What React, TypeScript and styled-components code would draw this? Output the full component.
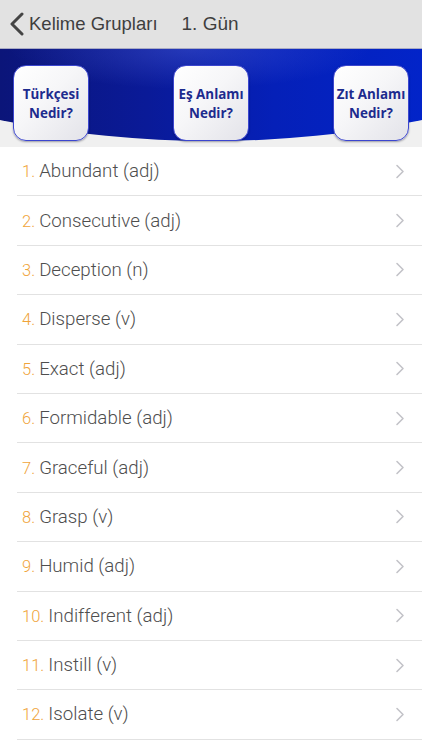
import React from 'react'
import styled, { createGlobalStyle } from 'styled-components'

const GlobalStyle = createGlobalStyle`
  html, body {
    margin: 0;
    padding: 0;
    background: #ffffff;
  }
  body {
    font-family: 'Liberation Sans', Arial, sans-serif;
    -webkit-font-smoothing: antialiased;
  }
`

const Screen = styled.div`
  width: 422px;
  min-height: 750px;
  background: #ffffff;
  overflow: hidden;
`

const NavBar = styled.div`
  display: flex;
  align-items: center;
  height: 48px;
  background: #e2e2e2;
  border-bottom: 1px solid #a9abc4;
  padding-left: 9px;
  color: #3e3e3e;
  font-size: 18.5px;
`

const BackButton = styled.div`
  display: flex;
  align-items: center;
  gap: 4px;
`

const Title = styled.div`
  margin-left: 24px;
  font-size: 19px;
`

const Banner = styled.div`
  position: relative;
  height: 98px;
  background: #f0f0f0;
  display: flex;
  justify-content: space-between;
  align-items: flex-start;
  padding: 16px 13px 0;
  box-sizing: border-box;

  &::before {
    content: '';
    position: absolute;
    inset: 0;
    background:
      radial-gradient(ellipse 180px 40px at 45% 0%, rgba(90, 110, 230, 0.35), rgba(90, 110, 230, 0) 100%),
      linear-gradient(90deg, #0b1579 0%, #0a1a98 35%, #0520b8 65%, #0224c9 100%);
    clip-path: circle(1070px at 50% -978px);
  }
`

const QuizButton = styled.div`
  position: relative;
  width: 76px;
  height: 76px;
  box-sizing: border-box;
  border-radius: 13px;
  border: 1.5px solid #3c46cf;
  background: linear-gradient(135deg, #ffffff 0%, #f6f6f8 45%, #e3e3e9 100%);
  box-shadow: 0 1px 2px rgba(0, 0, 30, 0.35);
  display: flex;
  align-items: center;
  justify-content: center;
  text-align: center;
  padding-top: 2px;
  font-family: 'Open Sans', Inter, sans-serif;
  font-weight: 700;
  font-size: 13.4px;
  line-height: 19px;
  color: #1d2b8e;
`

const List = styled.div`
  display: flex;
  flex-direction: column;
`

const Row = styled.div`
  height: 49.4px;
  box-sizing: border-box;
  margin-left: 17px;
  padding: 0 17px 0 5px;
  border-bottom: 1px solid #e2e2e2;
  display: flex;
  align-items: center;
  justify-content: space-between;
`

const Label = styled.div`
  font-family: Roboto, 'Liberation Sans', sans-serif;
  font-weight: 300;
  font-size: 18.7px;
  color: #4e4e4e;
`

const Index = styled.span`
  color: #f0a43a;
  font-size: 16.5px;
`

const words = [
  'Abundant (adj)',
  'Consecutive (adj)',
  'Deception (n)',
  'Disperse (v)',
  'Exact (adj)',
  'Formidable (adj)',
  'Graceful (adj)',
  'Grasp (v)',
  'Humid (adj)',
  'Indifferent (adj)',
  'Instill (v)',
  'Isolate (v)',
]

const Chevron = () => (
  <svg width="10" height="15" viewBox="0 0 10 15">
    <path d="M2 1.5 L8 7.5 L2 13.5" fill="none" stroke="#c3c3c8" strokeWidth="1.6" strokeLinecap="round" strokeLinejoin="round" />
  </svg>
)

const BackChevron = () => (
  <svg width="16" height="24" viewBox="0 0 16 24">
    <path d="M13 2 L3 12 L13 22" fill="none" stroke="#444444" strokeWidth="3" strokeLinecap="round" strokeLinejoin="round" />
  </svg>
)

export default function App() {
  return (
    <Screen>
      <GlobalStyle />
      <NavBar>
        <BackButton>
          <BackChevron />
          <span>Kelime Grupları</span>
        </BackButton>
        <Title>1. Gün</Title>
      </NavBar>
      <Banner>
        <QuizButton>
          Türkçesi
          <br />
          Nedir?
        </QuizButton>
        <QuizButton>
          Eş Anlamı
          <br />
          Nedir?
        </QuizButton>
        <QuizButton>
          Zıt Anlamı
          <br />
          Nedir?
        </QuizButton>
      </Banner>
      <List>
        {words.map((w, i) => (
          <Row key={w}>
            <Label>
              <Index>{i + 1}. </Index>
              {w}
            </Label>
            <Chevron />
          </Row>
        ))}
      </List>
    </Screen>
  )
}
